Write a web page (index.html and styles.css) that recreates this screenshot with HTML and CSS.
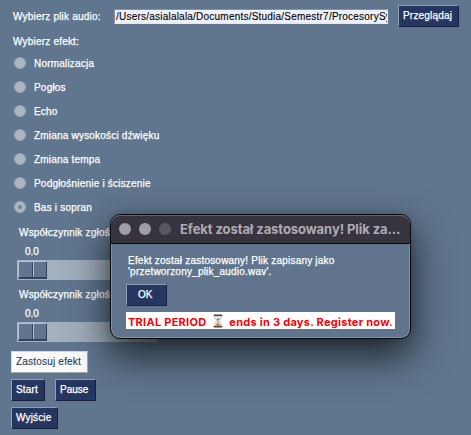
FILE: index.html
```html
<!DOCTYPE html>
<html lang="pl">
<head>
<meta charset="utf-8">
<title>Procesor audio</title>
<link rel="stylesheet" href="styles.css">
</head>
<body>
<main class="window">
  <div class="file-row">
    <span class="file-label">Wybierz plik audio:</span>
    <div class="path"><span>/Users/asialalala/Documents/Studia/Semestr7/ProcesorySy</span></div>
    <button class="btn browse">Przeglądaj</button>
  </div>
  <div class="heading">Wybierz efekt:</div>
  <div class="radios">
    <label class="radio"><i></i><span>Normalizacja</span></label>
    <label class="radio"><i></i><span>Pogłos</span></label>
    <label class="radio"><i></i><span>Echo</span></label>
    <label class="radio"><i></i><span>Zmiana wysokości dźwięku</span></label>
    <label class="radio"><i></i><span>Zmiana tempa</span></label>
    <label class="radio"><i></i><span>Podgłośnienie i ściszenie</span></label>
    <label class="radio selected"><i></i><span>Bas i sopran</span></label>
  </div>
  <div class="slider">
    <div class="slider-label">Współczynnik zgłoś</div>
    <div class="value">0.0</div>
    <div class="track"><div class="thumb"><b></b><b></b></div></div>
  </div>
  <div class="slider">
    <div class="slider-label">Współczynnik zgłoś</div>
    <div class="value">0.0</div>
    <div class="track"><div class="thumb"><b></b><b></b></div></div>
  </div>
  <div class="actions">
    <button class="btn apply">Zastosuj efekt</button>
    <div class="pair"><button class="btn start">Start</button><button class="btn pause">Pause</button></div>
    <button class="btn exit">Wyjście</button>
  </div>
</main>
<section class="dialog">
  <header class="titlebar">
    <i class="dot"></i><i class="dot"></i><i class="dot dim"></i>
    <span class="title">Efekt został zastosowany! Plik za...</span>
  </header>
  <div class="content">
    <p class="message">Efekt został zastosowany! Plik zapisany jako<br>'przetworzony_plik_audio.wav'.</p>
    <button class="btn ok">OK</button>
    <div class="trial">
      <span>TRIAL PERIOD</span>
      <svg class="glass" viewBox="0 0 10 14" width="10" height="14">
        <path d="M1.500 2h7v1.500c0 2-2 2.500-2 3.500s2 1.500 2 3.500V12h-7v-1.500c0-2 2-2.500 2-3.500s-2-1.500-2-3.500z" fill="#e3e8ea" stroke="#b0b6b9" stroke-width=".6"/>
        <path d="M3 4.800h4L5.300 6.600v2.600l2.500 2.300H2.200l2.500-2.300V6.600z" fill="#a8713f"/>
        <path d="M.7.5h8.600v1.500H.7zM.7 12h8.600v1.500H.7z" fill="#5c4036"/>
      </svg>
      <span>ends in 3 days. Register now.</span>
    </div>
  </div>
</section>
</body>
</html>
```
FILE: styles.css
```css
* { box-sizing: border-box; }
html, body { margin: 0; height: 100%; overflow: hidden; }
body {
  position: relative;
  background: #60768f;
  color: #fff;
  font: 10px/12px "Liberation Sans", Arial, sans-serif;
  -webkit-text-stroke: .25px currentColor;
  white-space: nowrap;
}
button { font: inherit; color: inherit; -webkit-text-stroke: inherit; letter-spacing: inherit; }
.window { padding: 5px 0 0 11px; }
.file-row { display: flex; align-items: center; height: 22px; padding-left: 2px; }
.file-label { width: 101px; padding-top: 1px; letter-spacing: .2px; }
.path {
  width: 274px; height: 15px; margin-right: 10px; padding-left: 1px;
  overflow: hidden; color: #000; background: #eeeff7;
  border: 1px solid #e6e8ef; border-top-color: #92918f; border-left-color: #92918f;
  letter-spacing: .22px;
  line-height: 13px;
  -webkit-text-stroke: .1px #000;
}
.btn {
  display: block; height: 22px; padding: 0 0 1px 4px; text-align: left;
  background: #253760;
  border: 1px solid; border-color: #8f9db3 #17203f #17203f #8f9db3;
  border-radius: 0;
}
.browse { width: 61px; letter-spacing: .2px; }
.heading { height: 24px; padding: 9px 0 0 2px; letter-spacing: .2px; }
.radio { display: flex; align-items: center; height: 24px; padding-left: 3px; }
.radio i {
  display: flex; align-items: center; justify-content: center;
  width: 12px; height: 12px; margin-right: 8px; border-radius: 50%;
  background: #aab6c4; border: 1px solid #a0a8b1;
}
.radio.selected i::after { content: ""; width: 4px; height: 4px; border-radius: 50%; background: #74818e; }
.radio span { padding-top: 2px; letter-spacing: .2px; }
.slider { width: 146px; height: 62px; padding-left: 6px; }
.slider-label { height: 20px; padding: 8px 0 0 2px; letter-spacing: .2px; }
.value { height: 21px; padding: 7px 0 0 8px; letter-spacing: 0; }
.track { height: 20px; padding: 1px 0 1px 1px; background: linear-gradient(90deg, #a5b2c1, #9eacb9 60%, #929fac); }
.thumb { display: flex; width: 29px; height: 18px; border: 1px solid; border-color: #bbc5d1 #34435a #34435a #bbc5d1; border-width: 1px 1px 2px; }
.thumb b { flex: 1; background: #60758e; }
.thumb b:first-child { border-right: 1px solid #34435a; }
.thumb b:last-child { border-left: 1px solid #bbc5d1; }
.actions { display: grid; justify-items: start; gap: 6px; padding-top: 8px; }
.pair { display: flex; gap: 10px; }
.apply { width: 77px; color: #26385e; background: #fbfbfc; border-color: #d8dae0 #a5a7ac #a5a7ac #d8dae0; letter-spacing: .2px; -webkit-text-stroke: .1px #26385e; }
.start { width: 34px; letter-spacing: .15px; }
.pause { width: 41px; }
.exit { width: 47px; letter-spacing: .15px; }
.dialog {
  position: absolute; left: 110px; top: 214px; width: 301px; height: 125px;
  background: #60758d; border: 1px solid #07090c; border-radius: 10px;
  box-shadow: inset 0 0 0 1px #8393a5, 0 16px 38px 2px rgba(0,0,0,.68), 0 0 6px rgba(0,0,0,.15);
}
.titlebar {
  display: flex; align-items: center; height: 29px; padding-left: 8px;
  background: #37343f; border-bottom: 1px solid #07090c;
  border-radius: 9px 9px 0 0; box-shadow: inset 0 1px #66646d;
}
.dot { width: 12px; height: 12px; margin-right: 8px; border-radius: 50%; background: #a19da7; }
.dot.dim { background: #5a5761; margin-right: 9px; }
.title { font: 700 13px/16px Inter, sans-serif; color: #aeabb3; letter-spacing: -.08px; -webkit-text-stroke: 0; }
.content { padding: 11px 15px 0; }
.message { margin: 0 0 7px 2px; line-height: 11px; letter-spacing: .21px; }
.ok { width: 41px; padding-left: 11px; }
.trial {
  display: flex; align-items: center; width: 269px; height: 17px; margin-top: 6px; padding: 3px 0 0 2px;
  background: #fff; color: #f90006;
  font: 700 11px/14px Inter, sans-serif; letter-spacing: .26px; -webkit-text-stroke: 0;
}
.glass { margin: -2px 6px 0 7px; }
```
